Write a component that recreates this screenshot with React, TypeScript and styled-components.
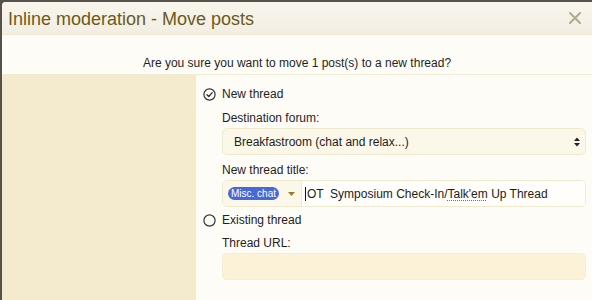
import styled, { createGlobalStyle } from 'styled-components'

const GlobalStyle = createGlobalStyle`
  html, body {
    margin: 0;
    padding: 0;
    background: #56514b;
    overflow: hidden;
    font-family: "Liberation Sans", Arial, sans-serif;
  }
`

const Overlay = styled.div`
  width: 590px;
  height: 298px;
  margin: 2px 0 0 2px;
  background: #fefcf7;
  border-radius: 4px 0 0 0;
  overflow: hidden;
  display: flex;
  flex-direction: column;
`

const Header = styled.div`
  height: 32px;
  display: flex;
  align-items: center;
  justify-content: space-between;
  padding: 0 11px 0 6px;
  background: linear-gradient(#f8f5ed, #f3eee2);
  border-bottom: 1px solid #f0e8d2;
`

const Title = styled.h2`
  margin: 0;
  font-size: 18px;
  font-weight: 400;
  color: #6a5a1c;
  line-height: 20px;
  padding-top: 1px;
`

const CloseButton = styled.button`
  background: none;
  border: none;
  padding: 0;
  width: 12px;
  height: 12px;
  display: flex;
  cursor: pointer;
`

const Message = styled.div`
  padding: 21px 0 4px;
  text-align: center;
  font-size: 12px;
  line-height: 14px;
  color: #1f1f1f;
  border-bottom: 1px solid #f3ecd5;
`

const FormRow = styled.div`
  flex: 1;
  display: grid;
  grid-template-columns: 194px 1fr;
`

const LabelCol = styled.div`
  background: #f4eacd;
`

const FieldCol = styled.div`
  padding: 11px 6px 0 7px;
  background: #fefcf7;
`

const RadioRow = styled.label<{ $gap?: number }>`
  display: flex;
  align-items: center;
  gap: 6px;
  height: 16px;
  margin-top: ${p => p.$gap ?? 0}px;
  font-size: 12px;
  color: #222;
`

const Field = styled.div<{ $gap?: number }>`
  margin: ${p => p.$gap ?? 8}px 0 0 19px;
`

const FieldLabel = styled.div`
  font-size: 12px;
  line-height: 14px;
  color: #1f1f1f;
  margin-bottom: 3px;
`

const SelectBox = styled.div`
  height: 27px;
  box-sizing: border-box;
  display: flex;
  align-items: center;
  justify-content: space-between;
  padding: 0 4px 0 11px;
  background: #fcf8e9;
  border: 1px solid #f1e9cd;
  border-radius: 5px;
  font-size: 12px;
  color: #1c1c1c;
`

const InputGroup = styled.div`
  height: 27px;
  box-sizing: border-box;
  display: flex;
  border: 1px solid #f1e9cd;
  border-radius: 5px;
  overflow: hidden;
`

const PrefixArea = styled.div`
  width: 79px;
  box-sizing: border-box;
  display: flex;
  align-items: center;
  padding-left: 5px;
  gap: 9px;
  background: #fcf8e9;
  border-right: 1px solid #f1e9cd;
`

const Pill = styled.span`
  display: inline-flex;
  align-items: center;
  justify-content: center;
  width: 51px;
  height: 13px;
  border-radius: 7px;
  background: #4668d8;
  color: #fff;
  font-size: 10px;
  line-height: 13px;
  white-space: nowrap;
`

const TitleInput = styled.div`
  flex: 1;
  display: flex;
  align-items: center;
  padding-left: 3px;
  background: #fffefa;
  font-size: 12px;
  color: #1c1c1c;
  white-space: pre;
`

const Cursor = styled.span`
  display: inline-block;
  width: 1px;
  height: 14px;
  background: #111;
  margin-right: 1px;
`

const Misspelled = styled.span`
  text-decoration-line: underline;
  text-decoration-style: dotted;
  text-decoration-color: #e04040;
  text-underline-offset: 2px;
`

const UrlInput = styled.div`
  height: 27px;
  box-sizing: border-box;
  background: #fcf2d8;
  border: 1px solid #f6ecd0;
  border-radius: 5px;
`

const CheckedRadio = () => (
  <svg width="13" height="13" viewBox="0 0 13 13">
    <circle cx="6.5" cy="6.5" r="5.6" fill="none" stroke="#333" strokeWidth="1.2" />
    <path d="M3.9 6.7 L5.8 8.5 L9.2 4.6" fill="none" stroke="#333" strokeWidth="1.3" strokeLinecap="round" strokeLinejoin="round" />
  </svg>
)

const EmptyRadio = () => (
  <svg width="13" height="13" viewBox="0 0 13 13">
    <circle cx="6.5" cy="6.5" r="5.6" fill="none" stroke="#333" strokeWidth="1.2" />
  </svg>
)

export default function App() {
  return (
    <>
      <GlobalStyle />
      <Overlay>
        <Header>
          <Title>Inline moderation - Move posts</Title>
          <CloseButton aria-label="Close">
            <svg width="12" height="12" viewBox="0 0 12 12">
              <path d="M1 1 L11 11 M11 1 L1 11" stroke="#b3a98e" strokeWidth="2" strokeLinecap="round" />
            </svg>
          </CloseButton>
        </Header>
        <Message>Are you sure you want to move 1 post(s) to a new thread?</Message>
        <FormRow>
          <LabelCol />
          <FieldCol>
            <RadioRow>
              <CheckedRadio />
              New thread
            </RadioRow>
            <Field $gap={9}>
              <FieldLabel>Destination forum:</FieldLabel>
              <SelectBox>
                Breakfastroom (chat and relax...)
                <svg width="8" height="10" viewBox="0 0 8 10">
                  <path d="M4 0.5 L7 4 L1 4 Z M4 9.5 L7 6 L1 6 Z" fill="#222" />
                </svg>
              </SelectBox>
            </Field>
            <Field>
              <FieldLabel>New thread title:</FieldLabel>
              <InputGroup>
                <PrefixArea>
                  <Pill>Misc. chat</Pill>
                  <svg width="7" height="4" viewBox="0 0 7 4">
                    <path d="M0 0 L7 0 L3.5 4 Z" fill="#9a7b2c" />
                  </svg>
                </PrefixArea>
                <TitleInput>
                  <Cursor />
                  OT  Symposium Check-In/<Misspelled>Talk'em</Misspelled> Up Thread
                </TitleInput>
              </InputGroup>
            </Field>
            <RadioRow $gap={5}>
              <EmptyRadio />
              Existing thread
            </RadioRow>
            <Field>
              <FieldLabel>Thread URL:</FieldLabel>
              <UrlInput />
            </Field>
          </FieldCol>
        </FormRow>
      </Overlay>
    </>
  )
}
